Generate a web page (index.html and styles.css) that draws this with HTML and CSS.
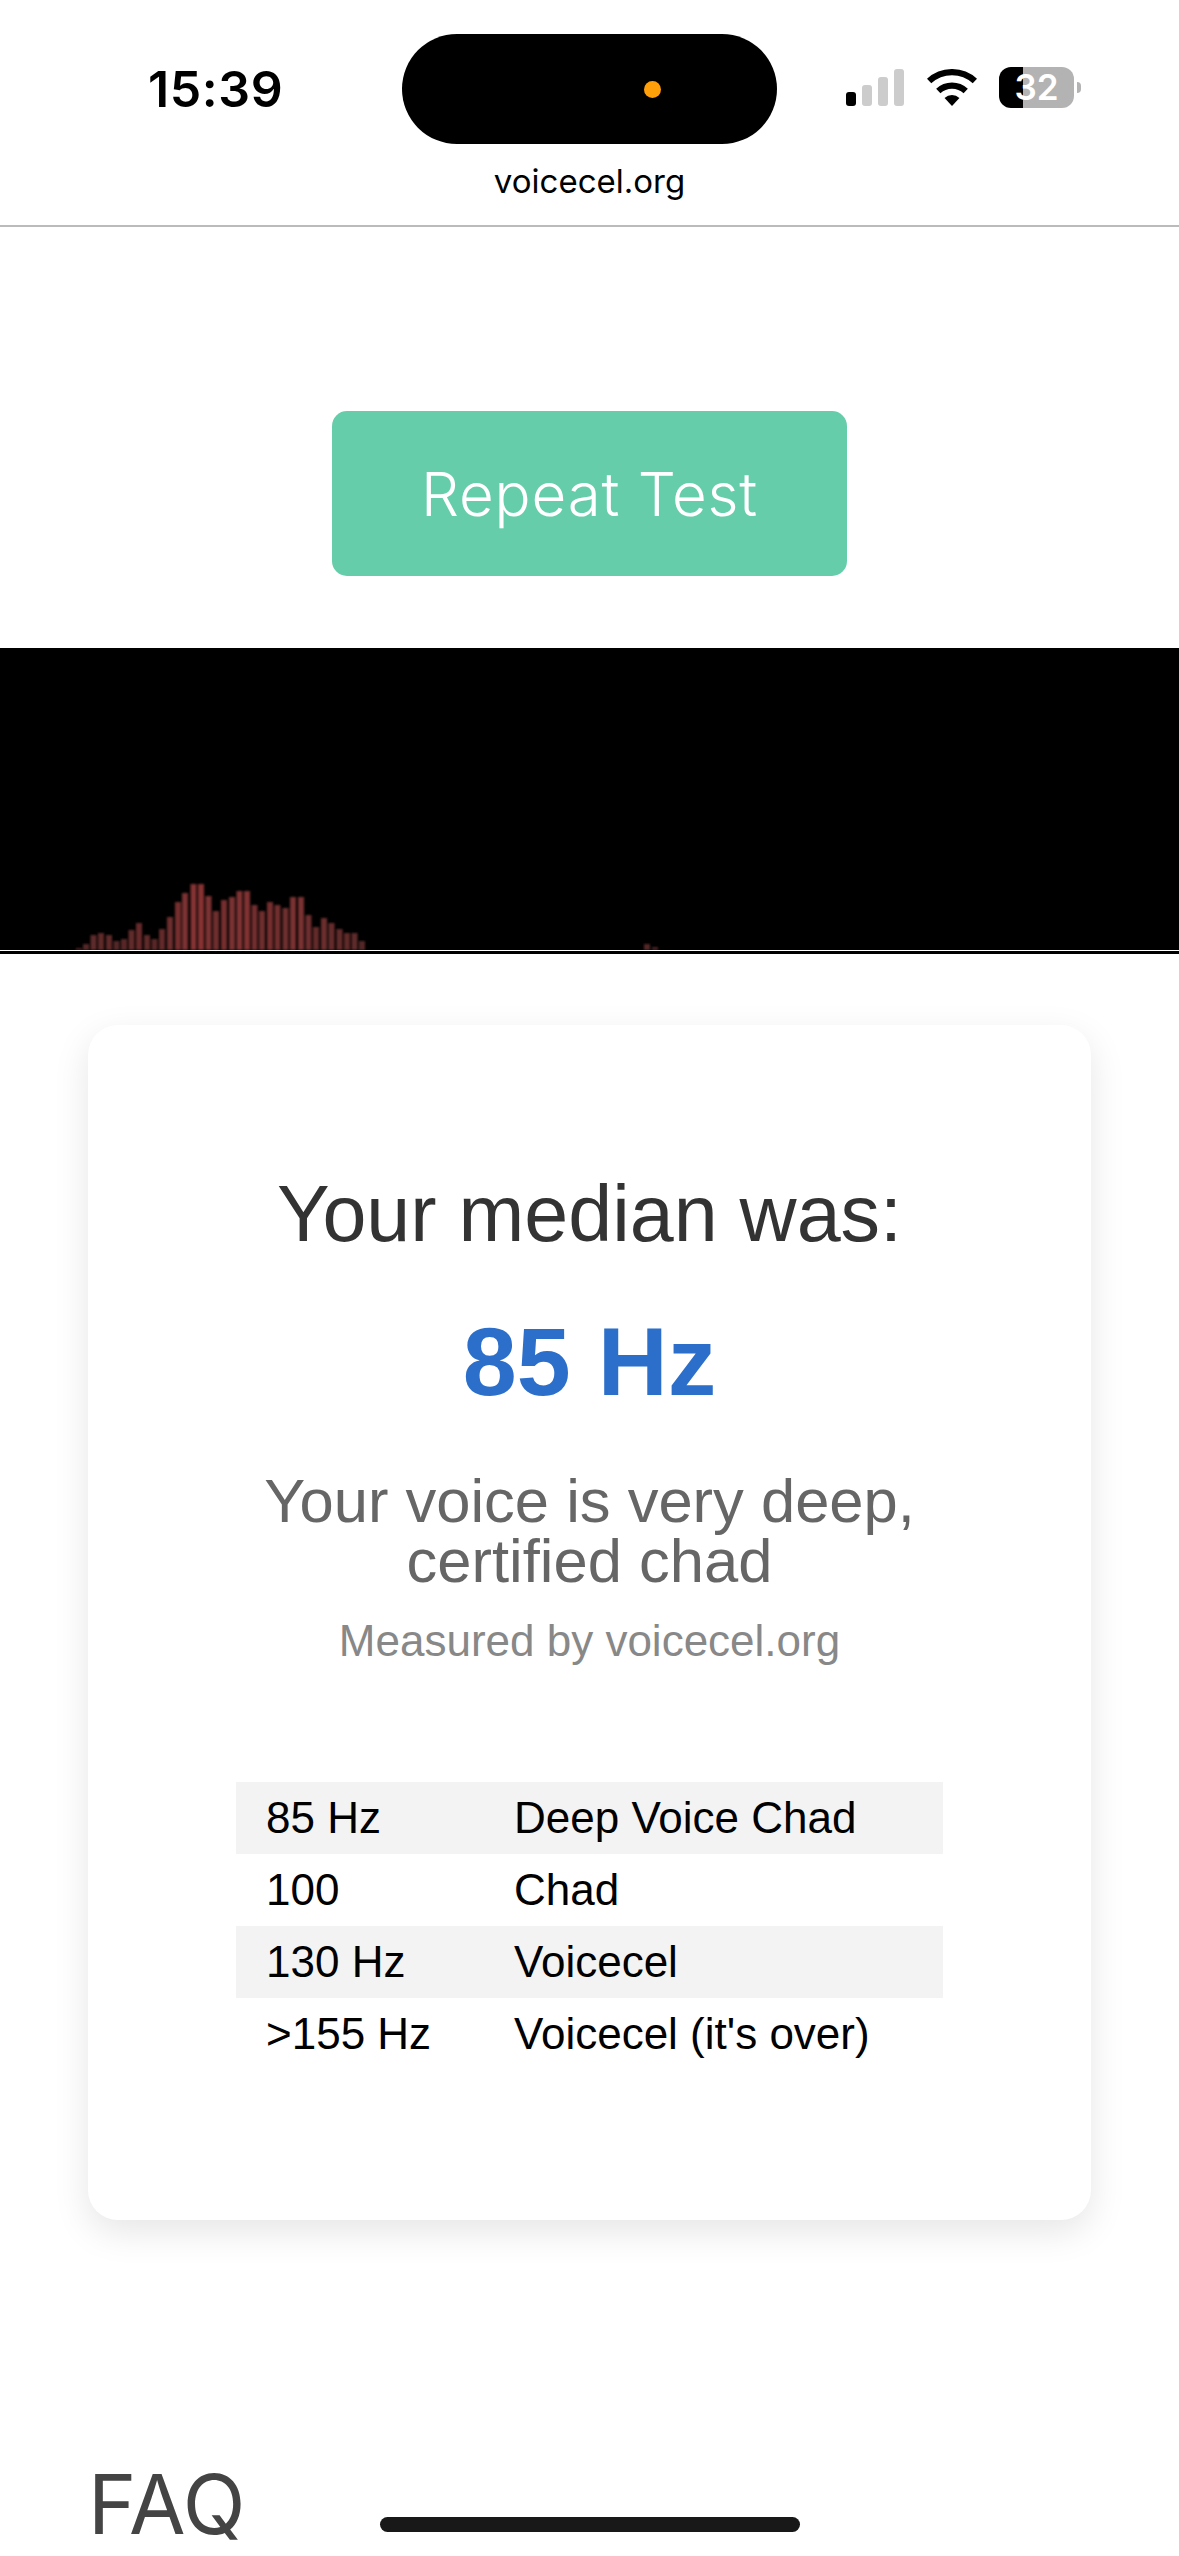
FILE: index.html
```html
<!DOCTYPE html>
<html lang="en">
<head>
    <meta charset="UTF-8">
    <meta name="viewport" content="width=device-width, initial-scale=1.0">
    <title>Voicecel - Result</title>
    <link rel="stylesheet" href="styles.css">
</head>
<body>
    <header class="top-bar">
        <div class="status-row">
            <div class="status-time">15:39</div>
            <div class="island"><span class="island-dot"></span></div>
            <div class="status-icons">
                <div class="signal">
                    <span class="signal-bar bar-1"></span>
                    <span class="signal-bar bar-2"></span>
                    <span class="signal-bar bar-3"></span>
                    <span class="signal-bar bar-4"></span>
                </div>
                <svg class="wifi" width="50" height="37" viewBox="0 0 50 37">
                    <path d="M2.13 12.04A33.85 33.85 0 0 1 47.87 12.04" fill="none" stroke="#000" stroke-width="6.3"/>
                    <path d="M11.29 22.03A20.3 20.3 0 0 1 38.71 22.03" fill="none" stroke="#000" stroke-width="6.3"/>
                    <path d="M17.57 28.89A11 11 0 0 1 32.43 28.89L25 37Z" fill="#000"/>
                </svg>
                <div class="battery">32</div>
            </div>
        </div>
        <div class="url">voicecel.org</div>
    </header>

    <main>
        <button class="repeat-btn" type="button">Repeat Test</button>

        <div class="visualizer">
            <svg class="bars" width="1179" height="306" viewBox="0 0 1179 306">
                <defs>
                    <filter id="soft" x="-2%" y="-10%" width="104%" height="120%">
                        <feGaussianBlur stdDeviation="0.9"/>
                    </filter>
                </defs>
                <g class="bar-group" filter="url(#soft)">
                    <rect x="76" y="300" height="2" fill="#4e2424"/>
                    <rect x="83" y="296" height="6" fill="#542828"/>
                    <rect x="90.5" y="287" height="15" fill="#5e2a2a"/>
                    <rect x="98" y="285" height="17" fill="#5e2a2a"/>
                    <rect x="106" y="287" height="15" fill="#5e2a2a"/>
                    <rect x="113.5" y="293" height="9" fill="#542828"/>
                    <rect x="121" y="291" height="11" fill="#582828"/>
                    <rect x="128.5" y="282" height="20" fill="#622c2c"/>
                    <rect x="136" y="275" height="27" fill="#662c2c"/>
                    <rect x="144" y="287" height="15" fill="#5e2a2a"/>
                    <rect x="151.5" y="291" height="11" fill="#582828"/>
                    <rect x="159" y="281" height="21" fill="#622c2c"/>
                    <rect x="167" y="269" height="33" fill="#6c2e2e"/>
                    <rect x="175" y="254" height="48" fill="#742e2e"/>
                    <rect x="182" y="245" height="57" fill="#7a3030"/>
                    <rect x="190.5" y="236" height="66" fill="#863232"/>
                    <rect x="198" y="236" height="66" fill="#863232"/>
                    <rect x="205.5" y="248" height="54" fill="#7a3030"/>
                    <rect x="213" y="263" height="39" fill="#6e2e2e"/>
                    <rect x="221" y="252" height="50" fill="#742e2e"/>
                    <rect x="229" y="249" height="53" fill="#783030"/>
                    <rect x="236.5" y="243" height="59" fill="#803232"/>
                    <rect x="244" y="243" height="59" fill="#803232"/>
                    <rect x="251.5" y="257" height="45" fill="#722e2e"/>
                    <rect x="259" y="263" height="39" fill="#6e2e2e"/>
                    <rect x="267" y="254" height="48" fill="#742e2e"/>
                    <rect x="274.5" y="257" height="45" fill="#722e2e"/>
                    <rect x="282.5" y="260" height="42" fill="#702e2e"/>
                    <rect x="290" y="249" height="53" fill="#783030"/>
                    <rect x="298" y="249" height="53" fill="#783030"/>
                    <rect x="305.5" y="267" height="35" fill="#6c2e2e"/>
                    <rect x="313" y="279" height="23" fill="#622c2c"/>
                    <rect x="321" y="270" height="32" fill="#6a2e2e"/>
                    <rect x="328.5" y="275" height="27" fill="#662c2c"/>
                    <rect x="336.5" y="281" height="21" fill="#622c2c"/>
                    <rect x="344" y="285" height="17" fill="#5e2a2a"/>
                    <rect x="351.5" y="285" height="17" fill="#5e2a2a"/>
                    <rect x="359" y="293" height="9" fill="#542828"/>
                    <rect x="644" y="296" height="6" fill="#542828"/>
                    <rect x="652" y="299" height="3" fill="#442222"/>
                </g>
                <rect class="baseline" x="0" y="302" width="1179" height="1"/>
            </svg>
        </div>

        <section class="result-card">
            <h2 class="result-title">Your median was:</h2>
            <div class="result-value">85 Hz</div>
            <p class="result-text">Your voice is very deep,<br>certified chad</p>
            <p class="result-source">Measured by voicecel.org</p>
            <table class="scale-table">
                <tr><td class="scale-hz">85 Hz</td><td>Deep Voice Chad</td></tr>
                <tr><td class="scale-hz">100</td><td>Chad</td></tr>
                <tr><td class="scale-hz">130 Hz</td><td>Voicecel</td></tr>
                <tr><td class="scale-hz">&gt;155 Hz</td><td>Voicecel (it's over)</td></tr>
            </table>
        </section>

        <h2 class="faq-title">FAQ</h2>
    </main>

    <div class="home-indicator"></div>
</body>
</html>
```

FILE: styles.css
```css
/* Result page of the voice test */

html, body {
    margin: 0;
    padding: 0;
}

body {
    position: relative;
    width: 1179px;
    height: 2556px;
    overflow: hidden;
    background-color: #fff;
    font-family: "Liberation Sans", Arial, sans-serif;
}

.top-bar {
    height: 225px;
    border-bottom: 2px solid #bbb;
    font-family: Inter, sans-serif;
    color: #000;
}

.status-row {
    display: grid;
    grid-template-columns: 402px 375px 1fr;
    align-items: center;
    padding-top: 34px;
}

.status-time {
    padding-left: 148px;
    font-size: 50px;
    font-weight: 600;
    letter-spacing: 0.6px;
    line-height: 60px;
}

.island {
    display: flex;
    align-items: center;
    justify-content: flex-start;
    height: 110px;
    border-radius: 55px;
    background-color: #000;
}

.island-dot {
    width: 17px;
    height: 17px;
    margin-left: 242px;
    border-radius: 50%;
    background-color: #ff9f0a;
}

.status-icons {
    display: flex;
    align-items: flex-end;
    height: 41px;
    padding-left: 69px;
    padding-bottom: 3px;
    box-sizing: content-box;
}

.signal {
    display: flex;
    align-items: flex-end;
    gap: 6px;
    margin-bottom: 2px;
}

.signal-bar {
    width: 10px;
    border-radius: 3px;
    background-color: #ccc;
}

.bar-1 { height: 14px; background-color: #000; }
.bar-2 { height: 21px; }
.bar-3 { height: 29px; }
.bar-4 { height: 37px; }

.wifi {
    margin-left: 23px;
    margin-bottom: 2px;
}

.battery {
    position: relative;
    width: 75px;
    height: 41px;
    margin-left: 22px;
    border-radius: 12px;
    background: linear-gradient(90deg, #000 24px, #b3b3b3 24px);
    color: #fff;
    font-size: 35px;
    font-weight: 600;
    line-height: 41px;
    text-align: center;
}

.battery::after {
    content: "";
    position: absolute;
    left: 78px;
    top: 15px;
    width: 4px;
    height: 11px;
    border-radius: 0 6px 6px 0;
    background-color: #b3b3b3;
}

.url {
    margin-top: 17px;
    font-size: 33px;
    line-height: 40px;
    text-align: center;
}

.repeat-btn {
    display: block;
    width: 515px;
    height: 165px;
    margin: 184px auto 72px;
    padding: 0;
    border: none;
    border-radius: 15px;
    background-color: #66cdaa;
    color: #fff;
    font-family: Inter, sans-serif;
    font-size: 60px;
    font-weight: 300;
    letter-spacing: 0.8px;
}

.visualizer {
    height: 306px;
    background-color: #000;
}

.bars {
    display: block;
}

.bar-group rect {
    width: 6px;
}

.baseline {
    fill: #fff;
}

.result-card {
    width: 1003px;
    margin: 71px 0 0 88px;
    padding: 144px 0 150px;
    border-radius: 30px;
    background: #fff;
    box-shadow: 0 12px 36px rgba(0, 0, 0, 0.1);
    text-align: center;
}

.result-title {
    margin: 0 0 48px;
    color: #333;
    font-size: 79px;
    font-weight: 400;
    line-height: 90px;
}

.result-value {
    margin-bottom: 54px;
    color: #2b6fcb;
    font-size: 97px;
    font-weight: 700;
    line-height: 110px;
}

.result-text {
    margin: 0 0 26px;
    color: #666;
    font-size: 61.5px;
    line-height: 60px;
}

.result-source {
    margin: 0 0 117px;
    color: #888;
    font-size: 44px;
    line-height: 48px;
}

.scale-table {
    width: 707px;
    margin: 0 auto;
    border-collapse: collapse;
    color: #000;
    font-size: 44px;
    text-align: left;
}

.scale-table td {
    height: 72px;
    padding: 0 0 0 30px;
    line-height: 48px;
}

.scale-table tr:nth-child(odd) {
    background-color: #f3f3f3;
}

.scale-hz {
    width: 218px;
}

.faq-title {
    margin: 235px 0 0 88px;
    color: #444;
    font-family: Inter, sans-serif;
    font-size: 82px;
    font-weight: 400;
    line-height: 100px;
}

.home-indicator {
    position: absolute;
    left: 380px;
    top: 2517px;
    width: 420px;
    height: 15px;
    border-radius: 8px;
    background-color: #181818;
}
```
